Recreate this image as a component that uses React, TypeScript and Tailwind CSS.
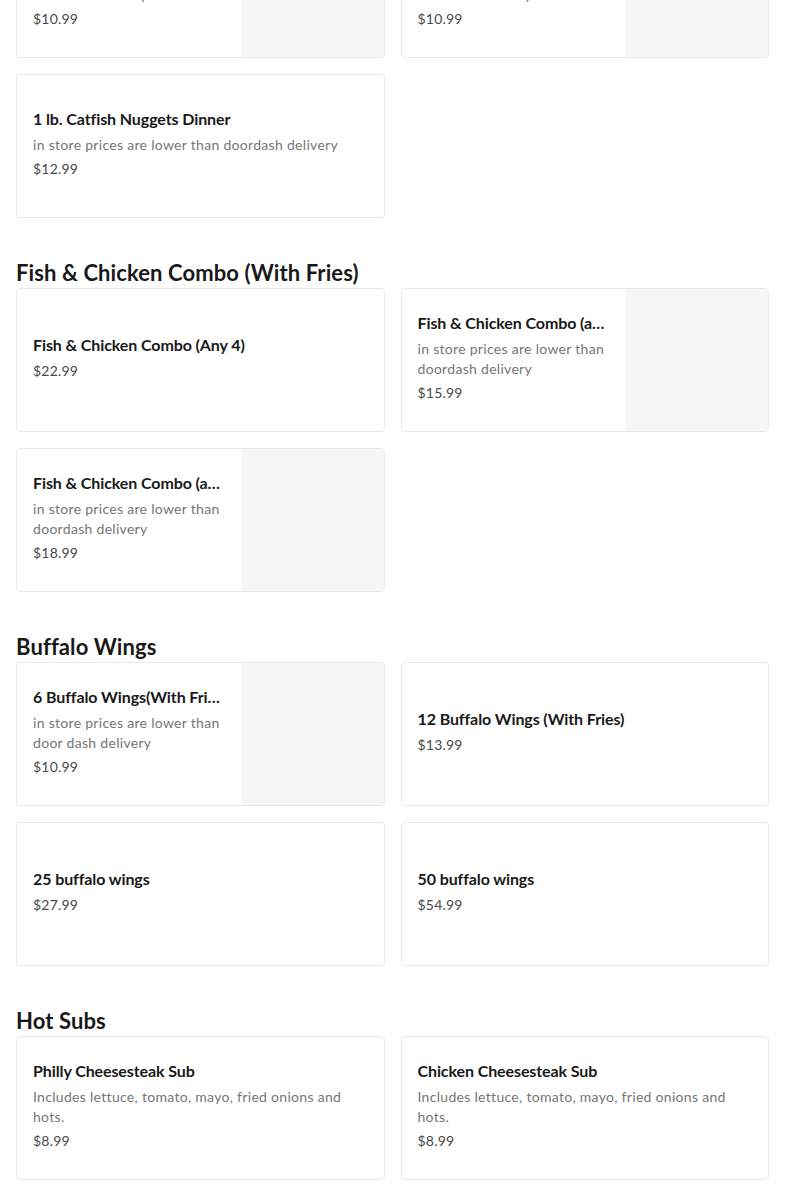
import React from 'react';

// menu item shape
interface Item {
  title: string;
  desc?: string;
  price: string;
  image?: boolean;
}

interface Section {
  name?: string;
  items: Item[];
}

const NOTE = 'in store prices are lower than doordash delivery';
const SUB = 'Includes lettuce, tomato, mayo, fried onions and hots.';

const sections: Section[] = [
  {
    items: [
      { title: 'Catfish Dinner (3 Pcs)', desc: NOTE, price: '$10.99', image: true },
      { title: 'Whiting Dinner (3 Pcs)', desc: NOTE, price: '$10.99', image: true },
      { title: '1 lb. Catfish Nuggets Dinner', desc: NOTE, price: '$12.99' },
    ],
  },
  {
    name: 'Fish & Chicken Combo (With Fries)',
    items: [
      { title: 'Fish & Chicken Combo (Any 4)', price: '$22.99' },
      { title: 'Fish & Chicken Combo (any 3)', desc: NOTE, price: '$15.99', image: true },
      { title: 'Fish & Chicken Combo (any 5)', desc: NOTE, price: '$18.99', image: true },
    ],
  },
  {
    name: 'Buffalo Wings',
    items: [
      { title: '6 Buffalo Wings(With Fries)', desc: 'in store prices are lower than door dash delivery', price: '$10.99', image: true },
      { title: '12 Buffalo Wings (With Fries)', price: '$13.99' },
      { title: '25 buffalo wings', price: '$27.99' },
      { title: '50 buffalo wings', price: '$54.99' },
    ],
  },
  {
    name: 'Hot Subs',
    items: [
      { title: 'Philly Cheesesteak Sub', desc: SUB, price: '$8.99' },
      { title: 'Chicken Cheesesteak Sub', desc: SUB, price: '$8.99' },
    ],
  },
];

const ItemCard: React.FC<{ item: Item }> = ({ item }) => (
  <div className="flex h-[144px] overflow-hidden rounded-[4px] border border-[#e8e8e8] bg-white">
    <div className="flex min-w-0 flex-1 flex-col justify-center px-4 pb-[4px]">
      <div className="truncate text-[16px] font-bold leading-[20px] tracking-[-0.1px] text-[#191919]">{item.title}</div>
      {item.desc && (
        <div className="mt-[6px] text-[14px] leading-[20px] tracking-[0.3px] text-[#767676]">{item.desc}</div>
      )}
      <div className={`${item.desc ? 'mt-[4px]' : 'mt-[6px]'} text-[14px] leading-[20px] tracking-[0.2px] text-[#494949]`}>
        {item.price}
      </div>
    </div>
    {item.image && <div className="w-[142px] shrink-0 bg-[#f6f6f6]" />}
  </div>
);

export default function App() {
  return (
    <div className="h-[1184px] overflow-hidden bg-white" style={{ fontFamily: 'Lato, "Open Sans", sans-serif' }}>
      {/* page is scrolled: first row is partly above the fold */}
      <div className="-mt-[86px] flex flex-col gap-[41px] px-4">
        {sections.map((s, i) => (
          <section key={i}>
            {s.name && (
              <h2 className="mb-[1px] text-[22px] font-bold leading-[28px] tracking-[0.1px] text-[#191919]">{s.name}</h2>
            )}
            <div className="grid grid-cols-2 gap-4">
              {s.items.map((it, j) => (
                <ItemCard key={j} item={it} />
              ))}
            </div>
          </section>
        ))}
      </div>
    </div>
  );
}
